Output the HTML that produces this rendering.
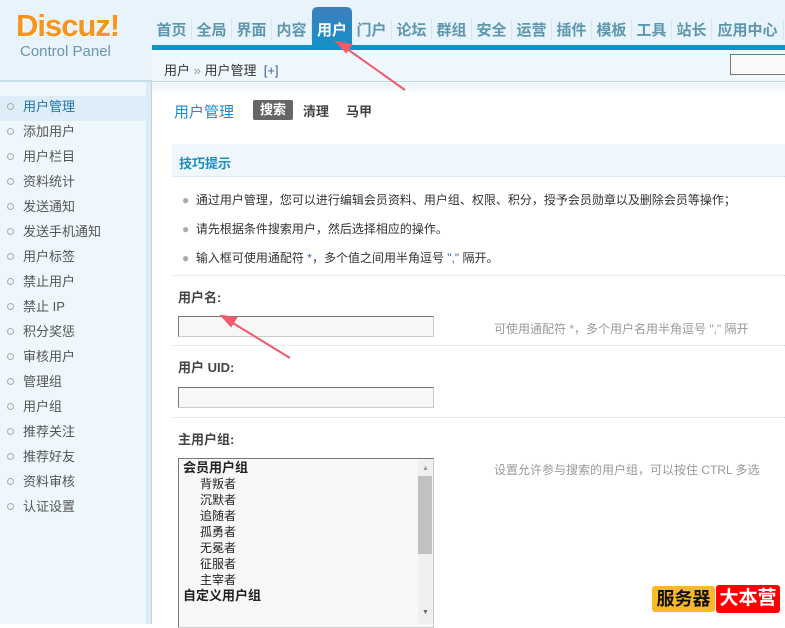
<!DOCTYPE html>
<html><head><meta charset="utf-8"><style>
*{margin:0;padding:0;box-sizing:border-box}
body{width:785px;height:624px;overflow:hidden;background:#fff;font-family:"Liberation Sans","Noto Sans CJK SC",sans-serif;font-size:12px;color:#333;position:relative}
.a{position:absolute}
.hdr{left:0;top:0;width:785px;height:50px;background:#e9f3fb}
.hdrl{left:0;top:50px;width:152px;height:30px;background:#e9f3fb}
.logo{left:16px;top:8px;font:bold 31px "Liberation Sans",sans-serif;color:#f7941d;letter-spacing:-1px;text-shadow:1px 1px 0 #fff}
.cp{left:20px;top:43px;font-size:15px;color:#6a97ac}
.nav{top:19px;font-size:15px;font-weight:bold;color:#5d97ad;white-space:nowrap}
.nav span{display:inline-block;width:40px;text-align:center;border-right:1px solid #d6e6f0}
.act{left:312px;top:7px;width:40px;height:43px;background:linear-gradient(#3f7fbd,#0f92c8);border-radius:5px 5px 0 0;color:#fff;font-size:15px;font-weight:bold;text-align:center;padding-top:12px}
.bar{left:152px;top:45px;width:633px;height:5px;background:#0a94c9}
.left{left:0;top:82px;width:152px;height:542px;background:#eef7fc}
.sep{left:146px;top:82px;width:6px;height:542px;background:#dcedf8;border-right:1px solid #b9d6e6}
.crumb{left:152px;top:50px;width:633px;height:32px;background:#f1f8fd;border-bottom:1px solid #b9d6e6}
.lline{left:0;top:80px;width:152px;height:2px;background:#c6dde9}
.side{left:0;top:96px;width:146px}
.side div{height:25px;line-height:22px;padding-left:23px;font-size:13px;color:#555;position:relative}
.side div:before{content:"";position:absolute;left:7px;top:7px;width:5px;height:5px;border:1px solid #aaa;border-radius:50%}
.side .on{background:#ddeef9;color:#1f6fa8}
.dot{height:0;border-top:1px dotted #c8dceb;left:172px;width:613px}
.inp{background:#f7f7f7;border:1px solid #777;border-right-color:#ccc;border-bottom-color:#ccc}
.lbl{font-size:13px;font-weight:bold;color:#444}
.hint{color:#999;font-size:12px}
</style></head><body>
<div class="a hdr"></div>
<div class="a hdrl"></div>
<div class="a logo">Discuz!</div>
<div class="a cp">Control Panel</div>
<div class="a nav" style="left:152px"><span>首页</span><span>全局</span><span>界面</span><span>内容</span><span style="border:0"></span><span>门户</span><span>论坛</span><span>群组</span><span>安全</span><span>运营</span><span>插件</span><span>模板</span><span>工具</span><span>站长</span><span style="width:72px">应用中心</span></div>
<div class="a bar"></div>
<div class="a act">用户</div>
<div class="a left"></div>
<div class="a lline"></div>
<div class="a crumb"></div>
<div class="a" style="left:164px;top:60px;font-size:13px;color:#333">用户 <span style="color:#999">»</span> 用户管理 <span style="color:#3a5ca8">&nbsp;[+]</span></div>
<div class="a" style="left:730px;top:54px;width:60px;height:21px;border:1px solid #777;background:#fafafa"></div>
<div class="a" style="left:152px;top:83px;width:633px;height:12px;background:linear-gradient(#e9f2f8,#fff)"></div>
<div class="a sep"></div>
<div class="a side">
<div class="on">用户管理</div><div>添加用户</div><div>用户栏目</div><div>资料统计</div><div>发送通知</div><div>发送手机通知</div><div>用户标签</div><div>禁止用户</div><div>禁止 IP</div><div>积分奖惩</div><div>审核用户</div><div>管理组</div><div>用户组</div><div>推荐关注</div><div>推荐好友</div><div>资料审核</div><div>认证设置</div>
</div>
<div class="a" style="left:174px;top:101px;font-size:15px;color:#1a8ccd">用户管理</div>
<div class="a" style="left:253px;top:100px;width:40px;height:20px;background:#666;color:#fff;font-weight:bold;font-size:13px;text-align:center;line-height:20px;border-radius:2px">搜索</div>
<div class="a lbl" style="left:303px;top:101px">清理</div>
<div class="a lbl" style="left:346px;top:101px">马甲</div>
<div class="a" style="left:172px;top:144px;width:613px;height:33px;background:#eff6fc;border-bottom:1px dotted #c8dceb"></div>
<div class="a" style="left:179px;top:153px;font-size:13px;font-weight:bold;color:#1a8fc0">技巧提示</div>
<div class="a" style="left:182px;top:186px;line-height:29px;font-size:12px;color:#333">
<div><span style="color:#aaa">●</span>&nbsp; 通过用户管理，您可以进行编辑会员资料、用户组、权限、积分，授予会员勋章以及删除会员等操作；</div>
<div><span style="color:#aaa">●</span>&nbsp; 请先根据条件搜索用户，然后选择相应的操作。</div>
<div><span style="color:#aaa">●</span>&nbsp; 输入框可使用通配符 <span style="color:#36c">*</span>，多个值之间用半角逗号 <span style="color:#36c">","</span> 隔开。</div>
</div>
<div class="a dot" style="top:275px"></div>
<div class="a lbl" style="left:178px;top:287px">用户名:</div>
<div class="a inp" style="left:178px;top:316px;width:256px;height:21px"></div>
<div class="a hint" style="left:494px;top:320px">可使用通配符 *，多个用户名用半角逗号 "," 隔开</div>
<div class="a dot" style="top:345px"></div>
<div class="a lbl" style="left:178px;top:357px">用户 UID:</div>
<div class="a inp" style="left:178px;top:387px;width:256px;height:21px"></div>
<div class="a dot" style="top:417px"></div>
<div class="a lbl" style="left:178px;top:429px">主用户组:</div>
<div class="a inp" style="left:178px;top:458px;width:256px;height:170px;background:#f8f8f8"></div>
<div class="a" style="left:418px;top:459px;width:15px;height:165px;background:#f0f0f0"></div>
<div class="a" style="left:418px;top:476px;width:14px;height:78px;background:#c1c1c1"></div>
<div class="a" style="left:422px;top:465px;font-size:7px;color:#999">▲</div>
<div class="a" style="left:422px;top:609px;font-size:7px;color:#666">▼</div>
<div class="a" style="left:183px;top:460px;font-size:12px;line-height:16px;color:#222">
<div style="font-weight:bold;font-size:13px">会员用户组</div>
<div style="padding-left:17px">背叛者</div><div style="padding-left:17px">沉默者</div><div style="padding-left:17px">追随者</div><div style="padding-left:17px">孤勇者</div><div style="padding-left:17px">无冕者</div><div style="padding-left:17px">征服者</div><div style="padding-left:17px">主宰者</div>
<div style="font-weight:bold;font-size:13px">自定义用户组</div>
</div>
<div class="a hint" style="left:494px;top:461px">设置允许参与搜索的用户组，可以按住 CTRL 多选</div>
<div class="a" style="left:652px;top:586px;width:63px;height:26px;background:#fbb829;border-radius:3px;font-weight:bold;font-size:18px;color:#111;text-align:center;line-height:26px">服务器</div>
<div class="a" style="left:716px;top:585px;width:64px;height:28px;background:#f00;border-radius:3px;font-weight:bold;font-size:19px;color:#fff;text-align:center;line-height:28px">大本营</div>
<svg class="a" style="left:0;top:0" width="785" height="624">
<g stroke="#f05a6a" stroke-width="2" fill="#f05a6a">
<line x1="343" y1="46" x2="405" y2="90"/><polygon points="337,42 351,45 346,52"/>
<line x1="228" y1="320" x2="290" y2="358"/><polygon points="222,316 236,318 231,326"/>
</g></svg>
</body></html>
